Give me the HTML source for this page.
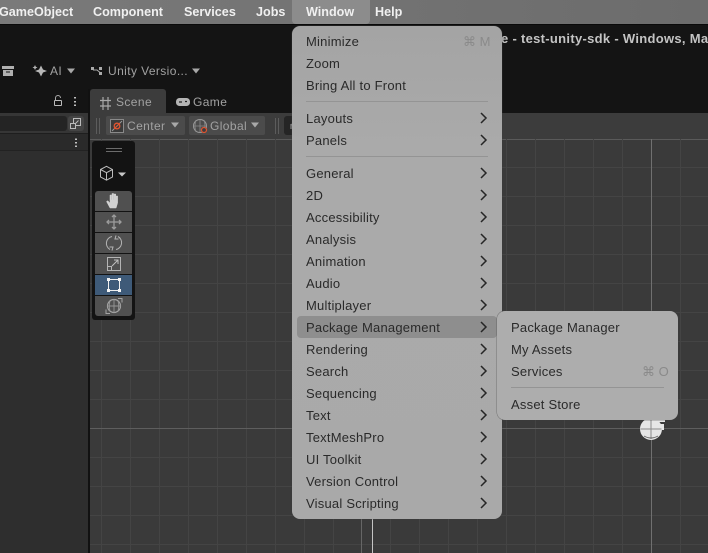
<!DOCTYPE html>
<html>
<head>
<meta charset="utf-8">
<style>
html,body{margin:0;padding:0;background:#141414;}
#p{position:relative;width:708px;height:553px;overflow:hidden;background:#141414;font-family:"Liberation Sans",sans-serif;filter:blur(.3px);}
#p div,#p span.a{position:absolute;}
.mb{top:3px;height:18px;line-height:18px;font-size:12.6px;font-weight:bold;color:#f0f0f0;white-space:nowrap;}
.t{white-space:nowrap;font-size:12px;color:#a2a2a2;letter-spacing:.4px;height:16px;line-height:16px;}
.menu{background:#a9a9a9;border-radius:8px;box-shadow:0 0 0 .5px rgba(60,60,60,.5);}
.i{left:14px;margin-top:1px;height:18px;line-height:18px;font-size:13px;color:#2a2a2a;letter-spacing:.22px;white-space:nowrap;}
.ar{left:186px;width:8px;height:12px;}
.sep{height:1px;background:#949494;}
.sc{font-size:13px;margin-top:1px;color:#8a8a8a;height:18px;line-height:18px;white-space:nowrap;letter-spacing:0;}
.b{left:3px;width:37px;height:20px;background:#505050;}
</style>
</head>
<body>
<div id="p">
  <!-- menu bar -->
  <div style="left:0;top:0;width:708px;height:24px;background:linear-gradient(90deg,#7a7a7a,#727272 55%,#6c6c6c);"></div>
  <div style="left:0;top:24px;width:708px;height:1px;background:#0a0a0a;"></div>
  <div style="left:292px;top:0;width:78px;height:24px;background:#8c8c8c;border-radius:0 0 4px 4px;"></div>
  <div class="mb" style="left:-1px;">GameObject</div>
  <div class="mb" style="left:93px;">Component</div>
  <div class="mb" style="left:184px;">Services</div>
  <div class="mb" style="left:256px;">Jobs</div>
  <div class="mb" style="left:306px;">Window</div>
  <div class="mb" style="left:375px;">Help</div>

  <!-- title -->
  <div style="left:501px;top:31px;height:16px;line-height:16px;font-size:13px;font-weight:bold;color:#c4c4c4;white-space:nowrap;letter-spacing:.3px;">e - test-unity-sdk - Windows, Mac</div>

  <!-- left panel -->
  <div style="left:0;top:113px;width:88px;height:440px;background:#2e2e2e;"></div>
  <div style="left:0;top:113px;width:88px;height:20px;background:#363636;"></div>
  <div style="left:0;top:133px;width:88px;height:16px;background:#2a2a2a;border-top:1px solid #1e1e1e;border-bottom:1px solid #222;"></div>
  <div style="left:0;top:116px;width:67px;height:15px;background:#242424;border-radius:0 3px 3px 0;"></div>
  <div style="left:68px;top:116px;width:16px;height:15px;background:#444;border-radius:3px;"></div>
  <div style="left:88px;top:89px;width:2px;height:464px;background:#111;"></div>

  <!-- scene background and toolbar -->
  <div style="left:90px;top:113px;width:618px;height:26px;background:#3c3c3c;"></div>
  <div style="left:90px;top:89px;width:76px;height:24px;background:#3c3c3c;border-radius:3px 3px 0 0;"></div>
  <svg style="position:absolute;left:90px;top:139px;" width="618" height="414" viewBox="90 139 618 414">
    <rect x="90" y="139" width="618" height="414" fill="#3a3a3a"/>
    <rect x="90" y="139" width="618" height="1" fill="#5a5a5a"/>
    <g stroke="#444444" stroke-width="1">
      <path d="M101.500 139V553M130.500 139V553M159.500 139V553M188.500 139V553M217.500 139V553M246.500 139V553M275.500 139V553M304.500 139V553M333.500 139V553M390.500 139V553M419.500 139V553M448.500 139V553M477.500 139V553M506.500 139V553M535.500 139V553M564.500 139V553M593.500 139V553M622.500 139V553M680.500 139V553"/>
      <path d="M90 167.500H708M90 196.500H708M90 225.500H708M90 254.500H708M90 283.500H708M90 312.500H708M90 341.500H708M90 370.500H708M90 399.500H708M90 457.500H708M90 486.500H708M90 515.500H708M90 544.500H708"/>
    </g>
    <path d="M361.500 139V553" stroke="#666"/>
    <path d="M651.500 139V553" stroke="#707070"/>
    <path d="M90 428.500H708" stroke="#5e5e5e" stroke-width="1"/>
    <path d="M372.500 139V553" stroke="#c4c4c4"/>
    <!-- globe gizmo -->
    <circle cx="651" cy="429" r="11" fill="#e6e6e6"/>
    <path d="M660 424h4v6h-4zM656 417h9v5h-9z" fill="#e6e6e6"/>
    <path d="M640.500 429H661.500M651 419V439" stroke="#8a8a8a" fill="none" stroke-width="1"/>
    <path d="M644 436Q651 440 658 436" stroke="#666" fill="none" stroke-width="1"/>
  </svg>

  <!-- toolbar widgets -->
  <div style="left:106px;top:116px;width:79px;height:19px;background:#4b4b4b;border-radius:2px;"></div>
  <div style="left:189px;top:116px;width:76px;height:19px;background:#4b4b4b;border-radius:2px;"></div>
  <div style="left:284px;top:116px;width:16px;height:19px;background:#252525;border-radius:3px 0 0 3px;"></div>
  <div class="t" style="left:127px;top:118px;">Center</div>
  <div class="t" style="left:210px;top:118px;">Global</div>
  <div class="t" style="left:116px;top:94px;">Scene</div>
  <div class="t" style="left:193px;top:94px;">Game</div>
  <div class="t" style="left:50px;top:63px;">AI</div>
  <div class="t" style="left:108px;top:63px;">Unity Versio...</div>

  <svg style="position:absolute;left:0;top:0;" width="300" height="330" viewBox="0 0 300 330">
    <!-- archive -->
    <path d="M2 66h12v3H2zM3 70h10v6H3z" fill="#b0b0b0"/>
    <path d="M6 72h4" stroke="#141414" stroke-width="1"/>
    <!-- sparkle -->
    <path d="M41 65.500l2 4 4 1.500-4 1.500-2 4-2-4-4-1.500 4-1.500z" fill="#b8b8b8"/>
    <path d="M35 65l.8 1.700 1.700.8-1.700.8-.8 1.700-.8-1.700-1.700-.8 1.700-.8z" fill="#b8b8b8"/>
    <path d="M67 68.500h8l-4 5zM192 68.500h8l-4 5zM171 122.500h8l-4 5zM251 122.500h8l-4 5z" fill="#a8a8a8"/>
    <!-- branch -->
    <path d="M93.500 68v2h3.500l3 2.500" stroke="#aaa" fill="none"/>
    <path d="M91 67h3v3h-3zM99 67h3v3h-3zM99 72h3v3h-3z" fill="#aaa"/>
    <!-- lock -->
    <path d="M55.500 100v-2a2.500 2.500 0 0 1 5 0" stroke="#aaa" fill="none"/>
    <rect x="54.500" y="100.500" width="7" height="5" rx=".5" fill="none" stroke="#bbb"/>
    <!-- dots -->
    <path d="M75 97v1.500M75 101v1.500M75 104.500V106M76 138.500V140M76 142V143.500M76 145.500V147" stroke="#c0c0c0" stroke-width="2"/>
    <!-- hash -->
    <path d="M103 97v13M108 97v13M100 100.500h11M100 106h11" stroke="#a8a8a8" stroke-width="1.200" fill="none"/>
    <!-- gamepad -->
    <rect x="176" y="98" width="14" height="8" rx="3.500" fill="#b4b4b4"/>
    <path d="M179 102h3M185 101.500h2" stroke="#222" stroke-width="1.200"/>
    <!-- toolbar handles -->
    <path d="M96.500 118v16M99.500 118v16M275.500 118v16M278.500 118v16" stroke="#5c5c5c"/>
    <path d="M291 124v5M291 124l2 2" stroke="#999" fill="none"/>
    <!-- center icon -->
    <rect x="110.500" y="119.500" width="13" height="13" fill="#3a3a3a" stroke="#8a8a8a"/>
    <path d="M112 131l10-10" stroke="#999"/>
    <circle cx="117" cy="126" r="2.800" fill="none" stroke="#e0532f" stroke-width="1.300"/>
    <path d="M114 129l6-6" stroke="#e0532f"/>
    <!-- global icon -->
    <circle cx="200" cy="126" r="6.500" fill="none" stroke="#9a9a9a"/>
    <path d="M193.500 126h13M200 119.500v13M196 120q-2 6 0 12M204 120q2 6 0 12" stroke="#8a8a8a" fill="none" stroke-width=".8"/>
    <circle cx="204" cy="130" r="2.500" fill="#3c3c3c" stroke="#e0532f" stroke-width="1.200"/>
    <!-- search btn icon -->
    <rect x="73.500" y="118.500" width="7" height="7" fill="none" stroke="#bbb"/>
    <rect x="70.500" y="123.500" width="5" height="5" fill="#444" stroke="#bbb"/>
    <path d="M75 124l3.500-3.500" stroke="#bbb"/>
  </svg>

  <!-- tool panel -->
  <div style="left:92px;top:141px;width:43px;height:179px;background:#131313;border-radius:3px;">
    <div class="b" style="top:50px;border-radius:3px 3px 0 0;"></div>
    <div class="b" style="top:71px;"></div>
    <div class="b" style="top:92px;"></div>
    <div class="b" style="top:113px;"></div>
    <div class="b" style="top:134px;background:#3e5a78;"></div>
    <div class="b" style="top:155px;height:20px;border-radius:0 0 3px 3px;"></div>
  </div>
  <svg style="position:absolute;left:92px;top:141px;" width="43" height="179" viewBox="92 141 43 179">
    <path d="M106 148.500h16M106 151.500h16" stroke="#6c6c6c"/>
    <path d="M100.500 169.500l6-3.200 6 3.200v7.500l-6 3.200-6-3.200zM100.500 169.500l6 3.200 6-3.200M106.500 172.700v7.500" fill="none" stroke="#bdbdbd" stroke-width="1"/>
    <path d="M118 172.500h8l-4 4z" fill="#c8c8c8"/>
    <!-- hand -->
    <path d="M110 208l-3.500-6.500 1.300-.8 2.200 2.500V195h1.500v5h.5v-6.500h1.600v6.500h.5v-6h1.600v6.500h.4v-4.500h1.500v7l-1.500 5z" fill="#d2d2d2" stroke="#d2d2d2" stroke-width=".5" stroke-linejoin="round"/>
    <!-- move -->
    <path d="M114 215v14M107 222h14M112 217l2-2 2 2M112 227l2 2 2-2M109 220l-2 2 2 2M119 220l2 2-2 2" fill="none" stroke="#9c9c9c" stroke-width="1.300"/>
    <!-- rotate -->
    <path d="M112 236.500a7 7 0 0 0-2 13M116 249.500a7 7 0 0 0 2-13M116 235.500l-1 3.500 3.500 0M112 250.500l1-3.500-3.500 0" fill="none" stroke="#b4b4b4" stroke-width="1"/>
    <!-- scale -->
    <rect x="107.500" y="257.500" width="13" height="13" fill="none" stroke="#b4b4b4"/>
    <rect x="107.500" y="266.500" width="4" height="4" fill="none" stroke="#b4b4b4"/>
    <path d="M112 266l6-6M114 260h4v4" fill="none" stroke="#c0c0c0"/>
    <!-- rect -->
    <path d="M108.500 279.500v11M119.500 279.500v11M109 279.500h10M109 290.500h10" fill="none" stroke="#f0f0f0"/>
    <path d="M107 278h3v3h-3zM118 278h3v3h-3zM107 289h3v3h-3zM118 289h3v3h-3z" fill="#f4f4f4"/>
    <!-- transform -->
    <circle cx="114" cy="306" r="6.500" fill="none" stroke="#a4a4a4" stroke-width="1.200"/>
    <path d="M114 299v14M107 306h14M110 301q-1.500 5 0 10M118 301q1.500 5 0 10" fill="none" stroke="#969696" stroke-width=".9"/>
    <path d="M118 298.500h4v4M106 309.500v4h4" fill="none" stroke="#a4a4a4"/>
  </svg>

  <!-- window menu -->
  <div class="menu" style="left:292px;top:26px;width:210px;height:493px;background:linear-gradient(180deg,#a4a4a4,#aaaaaa 25%,#a9a9a9);">
    <div class="i" style="top:6px;">Minimize</div>
    <div class="sc" style="left:171px;top:6px;">⌘ M</div>
    <div class="i" style="top:28px;">Zoom</div>
    <div class="i" style="top:50px;">Bring All to Front</div>
    <div class="sep" style="left:14px;top:75px;width:182px;"></div>
    <div class="i" style="top:83px;">Layouts</div>
    <div class="i" style="top:105px;">Panels</div>
    <div class="sep" style="left:14px;top:130px;width:182px;"></div>
    <div class="i" style="top:138px;">General</div>
    <div class="i" style="top:160px;">2D</div>
    <div class="i" style="top:182px;">Accessibility</div>
    <div class="i" style="top:204px;">Analysis</div>
    <div class="i" style="top:226px;">Animation</div>
    <div class="i" style="top:248px;">Audio</div>
    <div class="i" style="top:270px;">Multiplayer</div>
    <div style="left:5px;top:290px;width:200px;height:22px;background:#8e8e8e;border-radius:4px;"></div>
    <div class="i" style="top:292px;">Package Management</div>
    <div class="i" style="top:314px;">Rendering</div>
    <div class="i" style="top:336px;">Search</div>
    <div class="i" style="top:358px;">Sequencing</div>
    <div class="i" style="top:380px;">Text</div>
    <div class="i" style="top:402px;">TextMeshPro</div>
    <div class="i" style="top:424px;">UI Toolkit</div>
    <div class="i" style="top:446px;">Version Control</div>
    <div class="i" style="top:468px;">Visual Scripting</div>
    <svg style="position:absolute;left:186px;top:0;" width="12" height="493" viewBox="0 0 12 493">
      <g fill="none" stroke="#262626" stroke-width="1.500">
        <path d="M3 87l5 5-5 5M3 109l5 5-5 5M3 142l5 5-5 5M3 164l5 5-5 5M3 186l5 5-5 5M3 208l5 5-5 5M3 230l5 5-5 5M3 252l5 5-5 5M3 274l5 5-5 5M3 296l5 5-5 5M3 318l5 5-5 5M3 340l5 5-5 5M3 362l5 5-5 5M3 384l5 5-5 5M3 406l5 5-5 5M3 428l5 5-5 5M3 450l5 5-5 5M3 472l5 5-5 5"/>
      </g>
    </svg>
  </div>

  <!-- submenu -->
  <div class="menu" style="left:497px;top:311px;width:181px;height:109px;background:#adadad;">
    <div class="i" style="top:7px;">Package Manager</div>
    <div class="i" style="top:29px;">My Assets</div>
    <div class="i" style="top:51px;">Services</div>
    <div class="sc" style="left:145px;top:51px;">⌘ O</div>
    <div class="sep" style="left:14px;top:76px;width:153px;"></div>
    <div class="i" style="top:84px;">Asset Store</div>
  </div>
</div>
</body>
</html>
